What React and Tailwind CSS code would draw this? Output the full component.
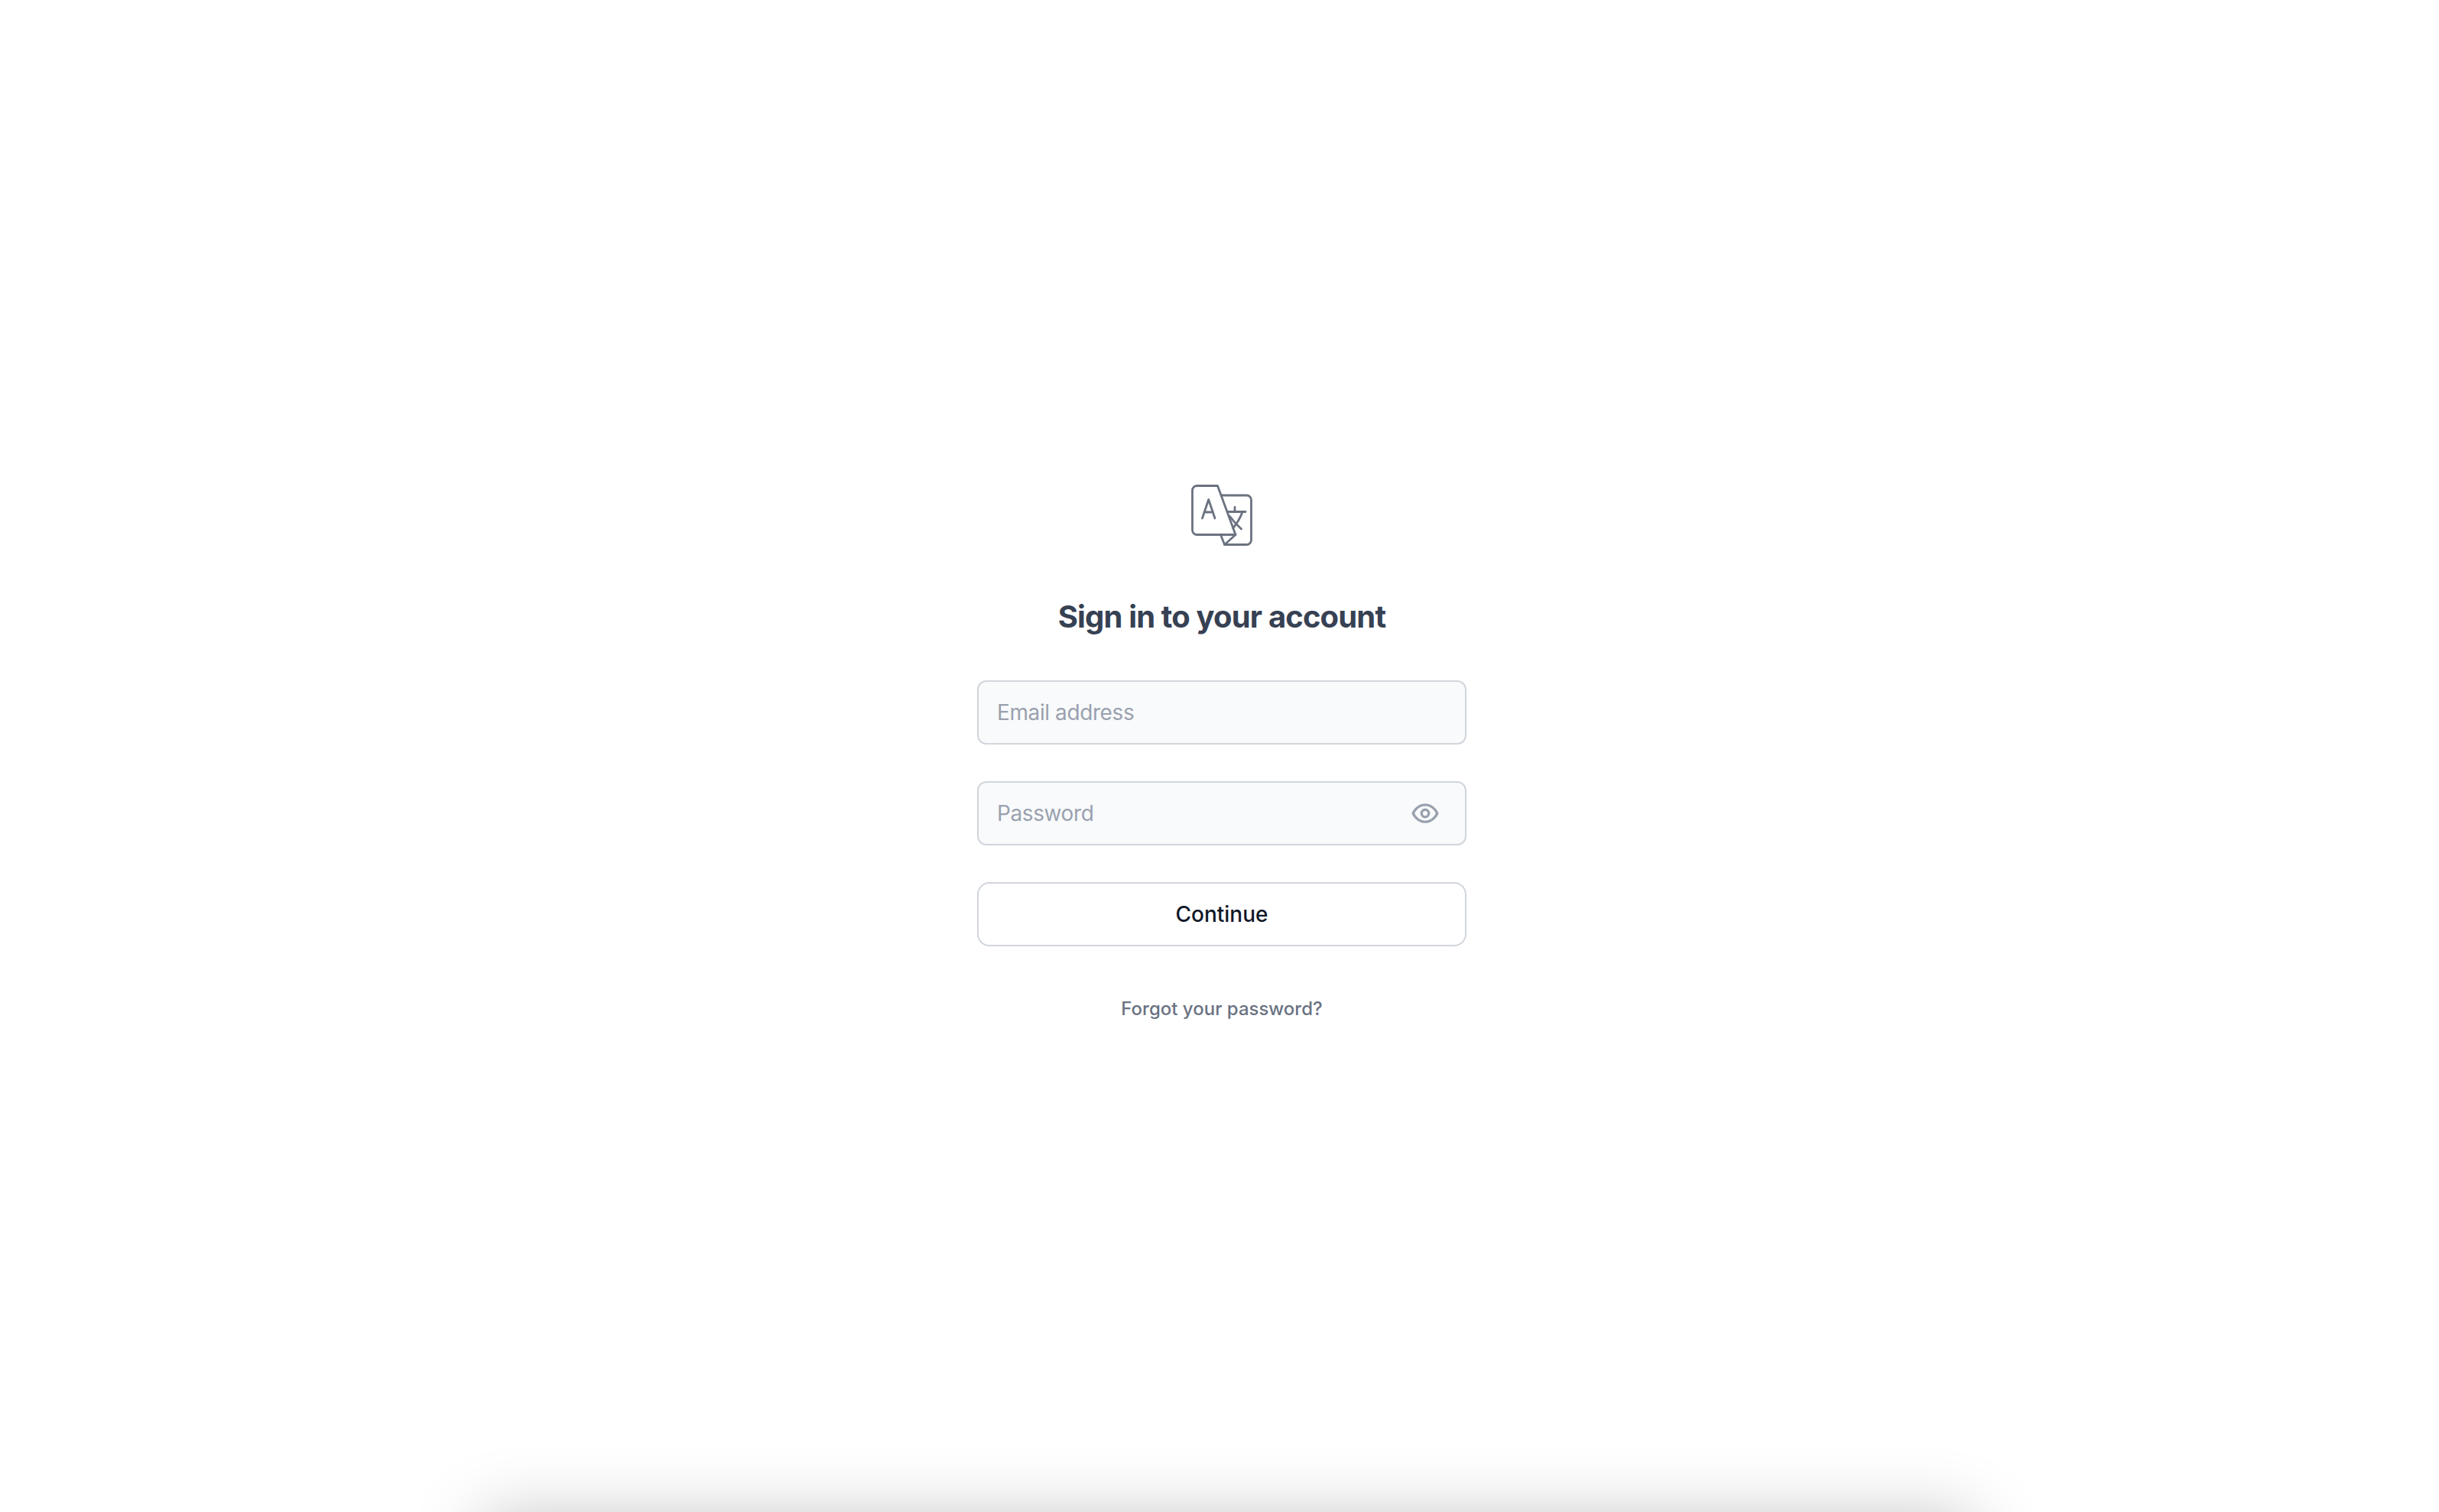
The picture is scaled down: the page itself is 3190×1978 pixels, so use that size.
function LanguageLogo() {
  return (
    <svg width="80" height="80" viewBox="0 0 80 80" fill="none" stroke="#6b7280" strokeWidth="2.8" strokeLinecap="round" strokeLinejoin="round">
      <path d="M34.5 1.5H7.5a6 6 0 0 0-6 6V59.5a6 6 0 0 0 6 6H58L34.5 1.5Z" />
      <path d="M39.5 14H72.5a6 6 0 0 1 6 6V72.5a6 6 0 0 1-6 6H43.7L58 65.5" />
      <path d="M38.7 66L43.7 78.7" />
      <path d="M14.5 44L22.7 19.5L31 44M17 36H28.5" />
      <path d="M47.5 35.5H71M57 29.5V35.5M67 35.5C64.5 43 60.5 50 54.5 57M50.5 41.5C54.5 47 60 53 65.5 58" />
    </svg>
  );
}

function EyeIcon() {
  return (
    <svg width="38" height="38" viewBox="0 0 24 24" fill="none" stroke="currentColor" strokeWidth="2.1" strokeLinecap="round" strokeLinejoin="round">
      <path d="M2 12s3-7 10-7 10 7 10 7-3 7-10 7-10-7-10-7Z" />
      <circle cx="12" cy="12" r="3" />
    </svg>
  );
}

export default function App() {
  return (
    <div className="relative h-screen overflow-hidden bg-white font-['Inter',sans-serif]">
      <div className="flex flex-col items-center pt-[634px] pl-[6px]">
        <LanguageLogo />
        <h1 className="mt-[65px] text-[40px] leading-[56px] font-bold text-gray-700 tracking-[-0.85px]">
          Sign in to your account
        </h1>

        <form className="mt-[55px] w-[640px] flex flex-col gap-12">
          <input
            type="email"
            placeholder="Email address"
            className="h-[84px] w-full rounded-xl border-2 border-gray-300 bg-gray-50 px-6 text-[28px] tracking-[-0.4px] text-gray-900 placeholder:text-gray-400 outline-none"
          />
          <div className="relative">
            <input
              type="password"
              placeholder="Password"
              className="h-[84px] w-full rounded-xl border-2 border-gray-300 bg-gray-50 px-6 pr-20 text-[28px] tracking-[-0.4px] text-gray-900 placeholder:text-gray-400 outline-none"
            />
            <button type="button" className="absolute right-[35px] top-[23px] text-gray-400">
              <EyeIcon />
            </button>
          </div>
          <button
            type="button"
            className="h-[84px] w-full rounded-2xl border-2 border-gray-300 bg-white text-[28px] font-medium text-gray-900"
          >
            Continue
          </button>
        </form>

        <a href="#" className="mt-[66px] text-[24px] leading-8 font-medium text-gray-500">
          Forgot your password?
        </a>
      </div>

      {/* window peeking in from below the page */}
      <div className="absolute left-[630px] top-[1987px] h-[400px] w-[1950px] rounded-2xl shadow-[0_0_90px_rgba(0,0,0,0.25)]" />
    </div>
  );
}
